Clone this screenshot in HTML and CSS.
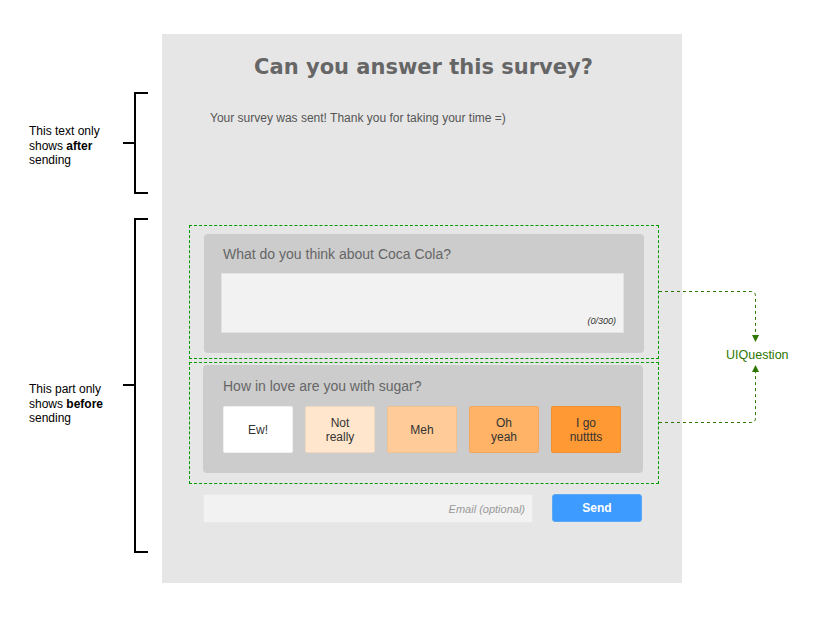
FILE: index.html
```html
<!DOCTYPE html>
<html>
<head>
<meta charset="utf-8">
<link rel="stylesheet" href="styles.css">
</head>
<body>
<div class="canvas">
  <div class="panel">
    <h1 class="title">Can you answer this survey?</h1>
    <p class="sent">Your survey was sent! Thank you for taking your time =)</p>

    <div class="qbox qbox-first">
      <div class="card card-text">
        <div class="question">What do you think about Coca Cola?</div>
        <div class="textarea"><span class="count">(0/300)</span></div>
      </div>
    </div>

    <div class="qbox qbox-second">
      <div class="card card-choice">
        <div class="question">How in love are you with sugar?</div>
        <div class="choices">
          <div class="choice c1">Ew!</div>
          <div class="choice c2">Not<br>really</div>
          <div class="choice c3">Meh</div>
          <div class="choice c4">Oh<br>yeah</div>
          <div class="choice c5">I go<br>nutttts</div>
        </div>
      </div>
    </div>

    <div class="footer">
      <div class="email">Email (optional)</div>
      <div class="send">Send</div>
    </div>
  </div>

  <div class="note note-after">This text only<br>shows <b>after</b><br>sending</div>
  <div class="note note-before">This part only<br>shows <b>before</b><br>sending</div>
  <div class="uiq">UIQuestion</div>

  <svg class="overlay" width="820" height="619" viewBox="0 0 820 619">
    <g fill="none" stroke="#000" stroke-width="2">
      <path d="M148 93 H135 V193 H148"/>
      <path d="M123 143 H135"/>
      <path d="M148 219 H135 V552 H148"/>
      <path d="M123 385 H135"/>
    </g>
    <g fill="none" stroke="#2d7600" stroke-width="1" stroke-dasharray="3 3">
      <path d="M659 291.5 H751 Q755.5 291.5 755.5 296 V335"/>
      <path d="M659 422.5 H751 Q755.5 422.5 755.5 418 V372"/>
    </g>
    <g fill="#2d7600">
      <polygon points="752,335 759,335 755.5,342"/>
      <polygon points="752,372 759,372 755.5,365"/>
    </g>
  </svg>
</div>
</body>
</html>
```

FILE: styles.css
```css
html, body {
  margin: 0;
  padding: 0;
  background: #fff;
}

.canvas {
  position: relative;
  width: 820px;
  height: 619px;
  overflow: hidden;
  font-family: "Liberation Sans", Arial, sans-serif;
}

.panel {
  margin: 34px 0 0 162px;
  width: 520px;
  height: 549px;
  background: #e6e6e6;
  box-sizing: border-box;
  padding-top: 20px;
  display: flex;
  flex-direction: column;
}

.title {
  margin: 0;
  font-family: "DejaVu Sans", Verdana, sans-serif;
  font-weight: bold;
  font-size: 21px;
  line-height: 26px;
  color: #666;
  text-align: center;
  padding-left: 3px;
}

.sent {
  margin: 31px 0 0 48px;
  font-size: 12px;
  line-height: 14px;
  color: #555;
}

.qbox {
  margin-left: 27px;
  width: 470px;
  box-sizing: border-box;
  border: 1px dashed #009900;
  padding-left: 14px;
  padding-right: 14px;
}

.qbox-first {
  margin-top: 100px;
  height: 134px;
  padding-top: 8px;
}

.qbox-second {
  margin-top: 3px;
  height: 122px;
  padding-top: 2px;
  padding-left: 13px;
  padding-right: 15px;
}

.card {
  background: #cccccc;
  border-radius: 4px;
  box-sizing: border-box;
}

.card-text {
  height: 119px;
  padding: 12px 20px 20px 17px;
}

.card-choice {
  height: 108px;
  padding: 13px 20px 20px 20px;
}

.question {
  font-size: 14px;
  line-height: 16px;
  color: #666;
}

.card-text .question {
  padding-left: 2px;
}

.textarea {
  margin-top: 11px;
  height: 60px;
  background: #f2f2f2;
  border: 1px solid #e2e2e2;
  box-sizing: border-box;
  display: flex;
  align-items: flex-end;
  justify-content: flex-end;
  padding: 0 7px 5px 0;
}

.count {
  font-size: 9px;
  font-style: italic;
  color: #333;
  line-height: 11px;
}

.choices {
  margin-top: 12px;
  display: flex;
  gap: 12px;
}

.choice {
  width: 70px;
  height: 47px;
  box-sizing: border-box;
  border: 1px solid rgba(0, 0, 0, 0.06);
  border-radius: 2px;
  display: flex;
  align-items: center;
  justify-content: center;
  text-align: center;
  font-size: 12px;
  line-height: 14px;
  color: #333;
}

.c1 { background: #ffffff; }
.c2 { background: #ffe6cc; }
.c3 { background: #ffcc99; }
.c4 { background: #ffb366; }
.c5 { background: #ff9933; }

.footer {
  margin: 10px 0 0 41px;
  display: flex;
  gap: 19px;
}

.email {
  width: 330px;
  height: 29px;
  box-sizing: border-box;
  background: #f2f2f2;
  border: 1px solid #e9e9e9;
  display: flex;
  align-items: center;
  justify-content: flex-end;
  padding-right: 7px;
  font-size: 11px;
  font-style: italic;
  color: #999;
}

.send {
  width: 90px;
  height: 28px;
  box-sizing: border-box;
  background: #3d9bff;
  border: 1px solid #5aa9f5;
  border-radius: 3px;
  display: flex;
  align-items: center;
  justify-content: center;
  font-size: 12px;
  font-weight: bold;
  color: #fff;
}

.note {
  position: absolute;
  left: 29px;
  font-size: 12px;
  line-height: 14.5px;
  color: #000;
}

.note b {
  font-weight: bold;
}

.note-after {
  top: 124px;
}

.note-before {
  top: 382px;
}

.uiq {
  position: absolute;
  left: 726px;
  top: 347px;
  font-size: 12.5px;
  line-height: 16px;
  color: #2d7600;
}

.overlay {
  position: absolute;
  left: 0;
  top: 0;
  pointer-events: none;
}
```
